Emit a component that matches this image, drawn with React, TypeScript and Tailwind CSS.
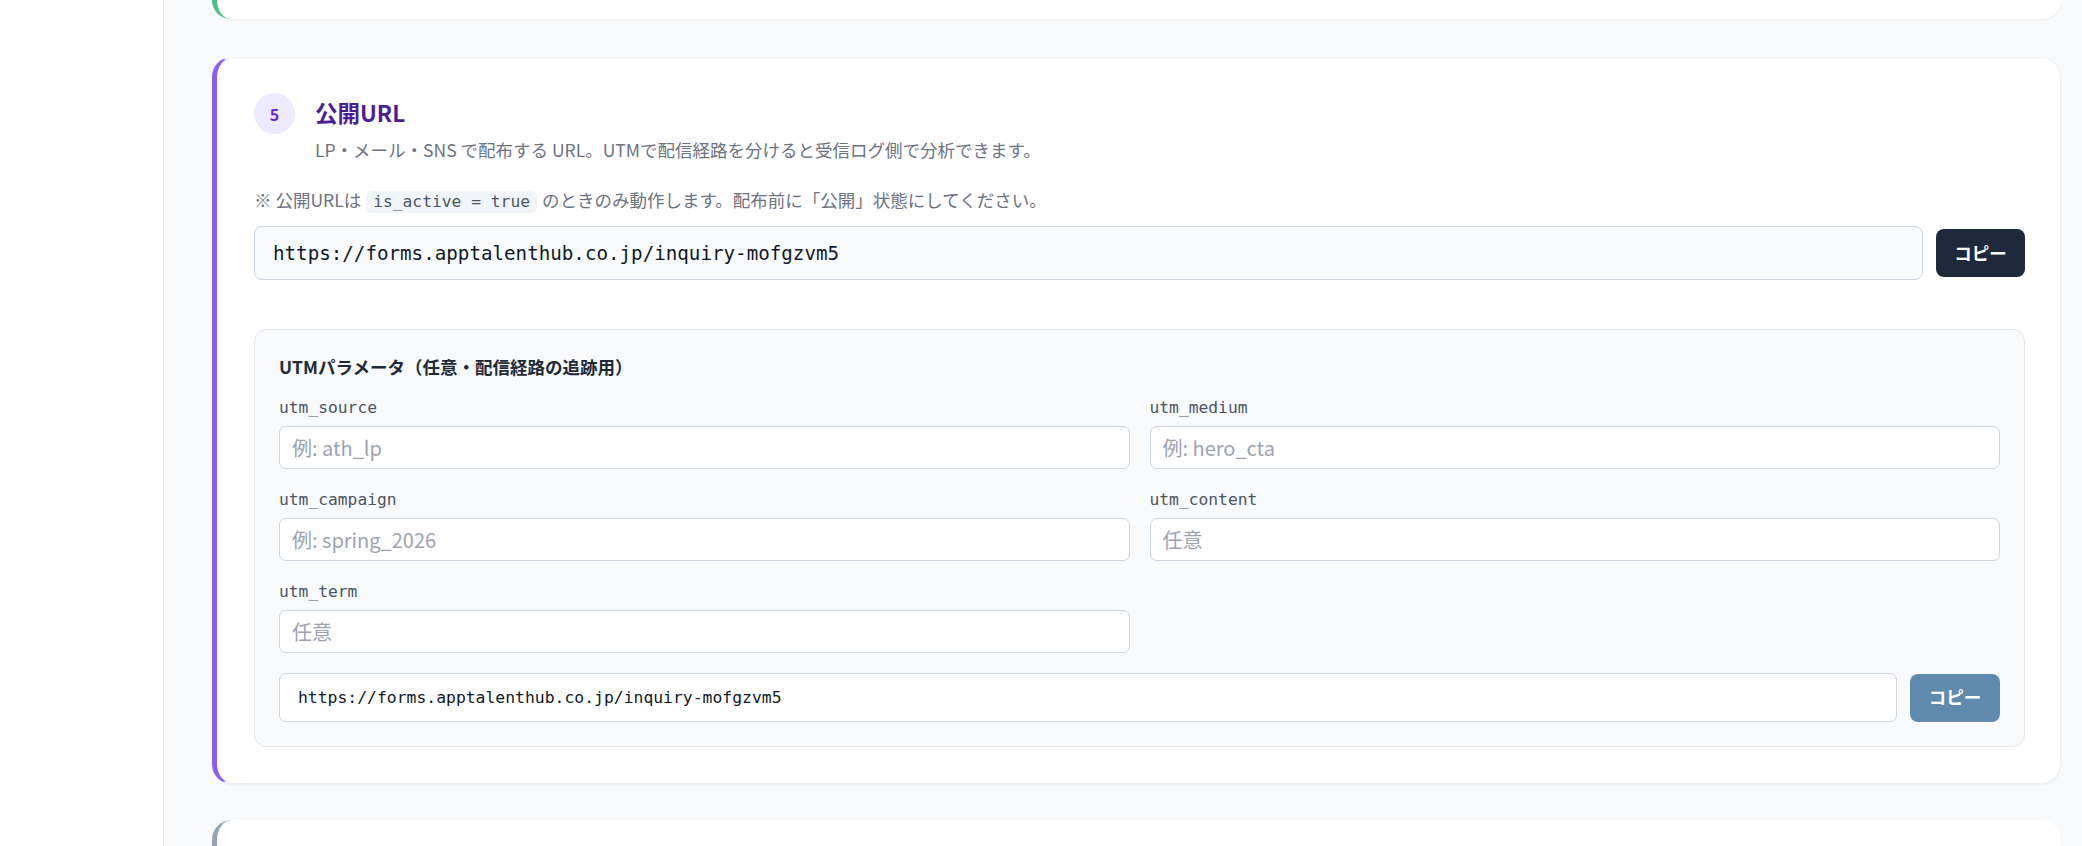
const sans = "font-['Noto_Sans_CJK_JP','Noto_Sans',sans-serif]";
const mono = "font-['DejaVu_Sans_Mono','Noto_Sans_CJK_JP',monospace]";

const publicUrl = 'https://forms.apptalenthub.co.jp/inquiry-mofgzvm5';

const utmFields = [
  { key: 'utm_source', placeholder: '例: ath_lp' },
  { key: 'utm_medium', placeholder: '例: hero_cta' },
  { key: 'utm_campaign', placeholder: '例: spring_2026' },
  { key: 'utm_content', placeholder: '任意' },
  { key: 'utm_term', placeholder: '任意' },
];

function UtmField({ name, placeholder }: { name: string; placeholder: string }) {
  return (
    <div>
      <label className={`block ${mono} text-[16.3px] leading-[22px] text-[#4b5563] mb-[7px]`}>{name}</label>
      <input
        type="text"
        placeholder={placeholder}
        className={`w-full h-[43px] rounded-[7px] border border-[#cbd5e1] bg-white px-[12px] ${sans} text-[20px] text-[#111827] placeholder:text-[#9ca3af] outline-none`}
      />
    </div>
  );
}

export default function App() {
  return (
    <div className={`min-h-screen flex bg-[#f8fafc] ${sans}`}>
      <aside className="w-[164px] shrink-0 bg-white border-r border-[#e5e7eb]" />

      <main className="flex-1 pl-[48px] pr-[21px] overflow-hidden h-[846px]">
        {/* previous step, scrolled almost out of view */}
        <div className="h-[19px] bg-white rounded-b-[20px] border-l-[5px] border-[#4fbf8a] shadow-[0_1px_2px_rgba(15,23,42,0.05)]" />

        {/* step 5: public URL */}
        <section className="mt-[38px] bg-white rounded-[20px] border border-[#eef1f5] border-l-[5px] border-l-[#8b5cf6] shadow-[0_1px_2px_rgba(15,23,42,0.05)] pl-[37px] pr-[35px] pt-[35px] pb-[36px]">
          <div className="flex items-start gap-[20px]">
            <div className="w-[41px] h-[41px] shrink-0 rounded-full bg-[#ede9fe] text-[#6d28d9] text-[16px] font-bold flex items-center justify-center">
              5
            </div>
            <div>
              <h2 className="text-[22.5px] leading-[38px] font-bold text-[#4c1d95]">公開URL</h2>
              <p className="mt-[6px] text-[17.5px] leading-[26px] text-[#6b7280]">
                LP・メール・SNS で配布する URL。UTMで配信経路を分けると受信ログ側で分析できます。
              </p>
            </div>
          </div>

          <p className="mt-[24px] text-[17.5px] leading-[26px] text-[#6b7280]">
            ※ 公開URLは
            <code className={`mx-[5px] inline-block rounded-[6px] bg-[#f1f5f9] px-[7px] leading-[22px] ${mono} text-[16.3px] text-[#4b5563]`}>
              is_active = true
            </code>
            のときのみ動作します。配布前に「公開」状態にしてください。
          </p>

          <div className="mt-[13px] flex items-center gap-[13px]">
            <input
              readOnly
              value={publicUrl}
              className={`flex-1 h-[54px] rounded-[8px] border border-[#cbd5e1] bg-[#f8fafc] px-[18px] ${mono} text-[19.2px] text-[#111827] outline-none`}
            />
            <button className="w-[89px] h-[48px] rounded-[8px] bg-[#1e293b] text-white text-[17.5px] font-bold">
              コピー
            </button>
          </div>

          <div className="mt-[49px] rounded-[12px] border border-[#e5e7eb] bg-[#f8fafc] p-[24px]">
            <h3 className="text-[17.5px] leading-[25px] font-bold text-[#1f2937]">UTMパラメータ（任意・配信経路の追跡用）</h3>

            <div className="mt-[18px] grid grid-cols-2 gap-x-[20px] gap-y-[20px]">
              {utmFields.map((f) => (
                <UtmField key={f.key} name={f.key} placeholder={f.placeholder} />
              ))}
            </div>

            <div className="mt-[20px] flex items-center gap-[13px]">
              <input
                readOnly
                value={publicUrl}
                className={`flex-1 h-[49px] rounded-[7px] border border-[#cbd5e1] bg-white px-[18px] ${mono} text-[16.4px] text-[#111827] outline-none`}
              />
              <button className="w-[90px] h-[48px] rounded-[8px] bg-[#5f8aad] text-white text-[17.5px] font-bold">
                コピー
              </button>
            </div>
          </div>
        </section>

        {/* next step */}
        <div className="mt-[36px] h-[60px] bg-white rounded-t-[20px] border-l-[5px] border-[#94a3b8] shadow-[0_1px_2px_rgba(15,23,42,0.05)]" />
      </main>
    </div>
  );
}
